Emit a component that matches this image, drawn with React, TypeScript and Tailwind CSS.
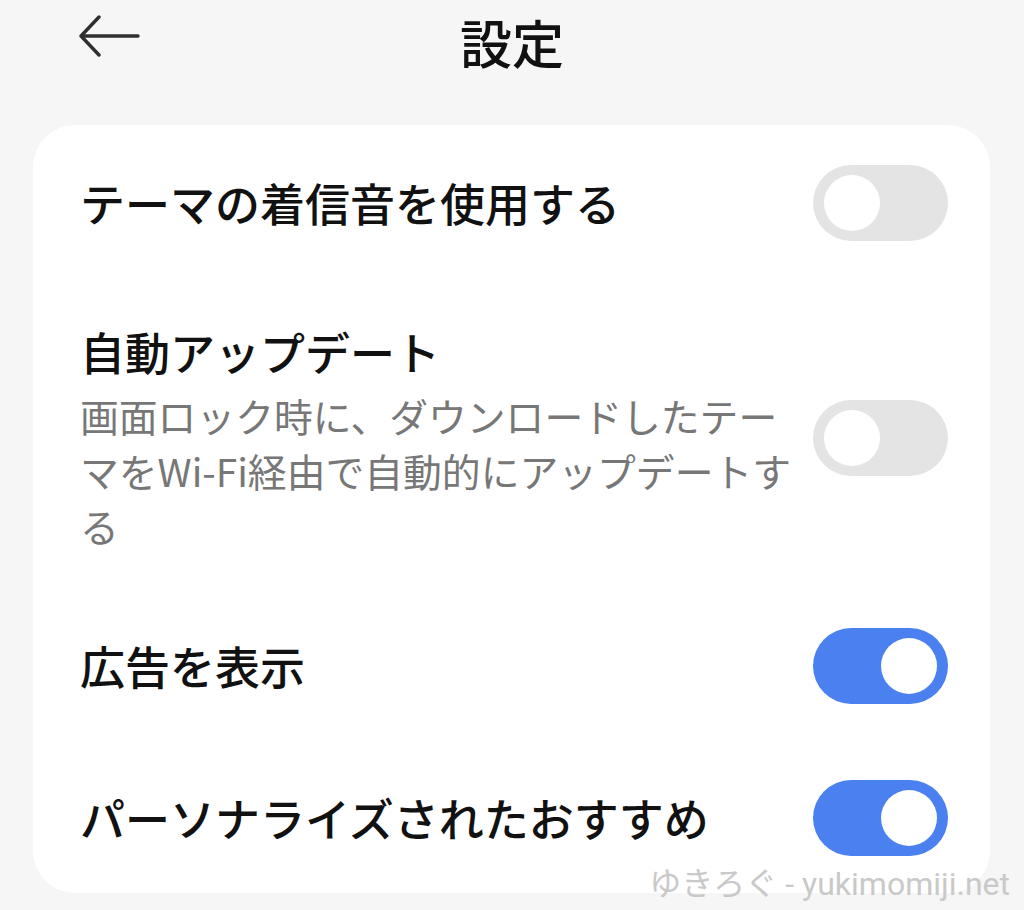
import React from "react";

const font = { fontFamily: '"Noto Sans CJK JP", "Noto Sans", sans-serif' };

function Toggle({ on }: { on: boolean }) {
  return (
    <div
      className={`flex h-[76px] w-[135px] shrink-0 items-center rounded-full px-[11px] ${
        on ? "justify-end bg-[#4a80f0]" : "justify-start bg-[#e4e4e4]"
      }`}
    >
      <div className="h-[56px] w-[56px] rounded-full bg-white" />
    </div>
  );
}

export default function App() {
  return (
    <div className="relative h-[910px] w-full overflow-hidden bg-[#f6f6f6]" style={font}>
      <div className="relative flex h-[125px] justify-center">
        <svg
          className="absolute left-[78px] top-[15px]"
          width="62"
          height="42"
          viewBox="0 0 62 42"
          fill="none"
          stroke="#2f2f2f"
          strokeWidth="3.4"
          strokeLinecap="round"
          strokeLinejoin="round"
        >
          <path d="M60 21H3M21 2L3 21l18 19" />
        </svg>
        <div className="pt-[10px] text-[52px] leading-[64px] font-medium text-[#111]">設定</div>
      </div>
      <div className="ml-[33px] mr-[34px] h-[768px] rounded-[42px] bg-white pl-[47px] pr-[42px]">
        <div className="flex h-[155px] items-center justify-between">
          <div className="text-[45px] leading-[60px] font-medium text-[#111]">テーマの着信音を使用する</div>
          <Toggle on={false} />
        </div>
        <div className="flex items-center justify-between pt-[42px] pb-[37px]">
          <div className="w-[730px] shrink-0">
            <div className="text-[45px] leading-[60px] font-medium text-[#111]">自動アップデート</div>
            <div className="mt-[6px] text-[38.8px] leading-[55px] text-[#777]">
              画面ロック時に、ダウンロードしたテー
              <br />
              マをWi-Fi経由で自動的にアップデートす
              <br />
              る
            </div>
          </div>
          <Toggle on={false} />
        </div>
        <div className="flex h-[152px] items-center justify-between">
          <div className="text-[45px] leading-[60px] font-medium text-[#111]">広告を表示</div>
          <Toggle on={true} />
        </div>
        <div className="flex h-[151px] items-center justify-between">
          <div className="text-[45px] leading-[60px] font-medium text-[#111]">パーソナライズされたおすすめ</div>
          <Toggle on={true} />
        </div>
      </div>
      <div
        className="absolute bottom-[6px] right-[14px] text-[32px] leading-[40px] text-[#c9c9c9]"
        style={{ fontFamily: 'Roboto, "Noto Sans CJK JP", sans-serif' }}
      >
        ゆきろぐ - yukimomiji.net
      </div>
    </div>
  );
}
